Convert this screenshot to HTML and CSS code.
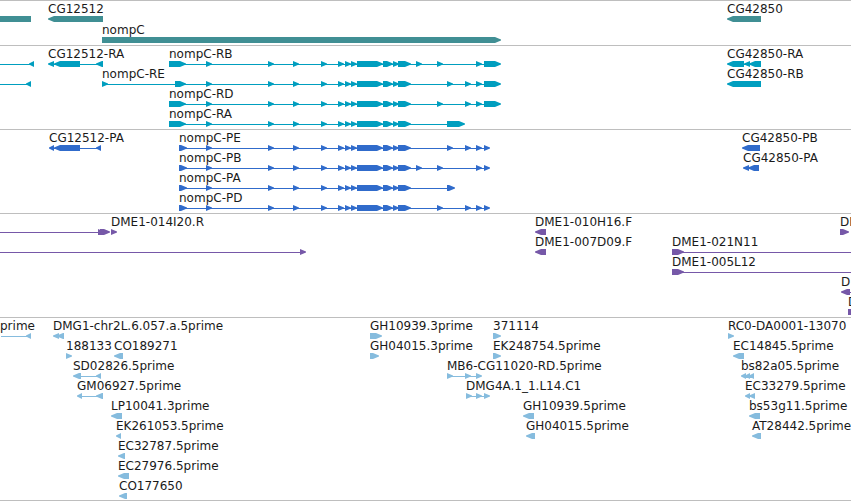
FILE: index.html
```html
<!DOCTYPE html>
<html lang="en">
<head>
    <meta charset="UTF-8">
    <meta name="viewport" content="width=device-width, initial-scale=1.0">
    <title>Genome Browser</title>

    <link rel="stylesheet" href="styles.css">
</head>
<body>

    <main class="tracks">
        <section class="track genes" id="genes" aria-label="Genes"></section>
        <section class="track transcripts" id="transcripts" aria-label="Transcripts"></section>
        <section class="track proteins" id="proteins" aria-label="Coding sequences"></section>
        <section class="track clones" id="clones" aria-label="Clones"></section>
        <section class="track ests" id="ests" aria-label="ESTs"></section>
    </main>

    <script src="tracks.js"></script>

</body>
</html>
```

FILE: styles.css
```css
body {
    margin: 0;
    background-color: white;
    color: black;
    font-family: "DejaVu Sans", sans-serif;
    font-size: 12px;
}

.tracks {
    overflow: hidden;
    border-bottom: 1px solid #bebebe;
}

/* Tracks */
.track {
    display: flex;
    flex-direction: column;
    padding: 1px 0 2px;
    border-top: 1px solid #bebebe;
}

.track:last-child {
    padding-bottom: 1px;
}

.genes {
    gap: 1px;
    color: #408f94;
}

.transcripts {
    color: #009ebf;
}

.proteins {
    color: #306bcb;
}

.clones {
    color: #7658a8;
}

.ests {
    color: #86bcde;
}

/* Features, placed along the row by their start on the sequence */
.row {
    position: relative;
    height: 20px;
}

.feature {
    position: absolute;
    top: 0;
}

.label {
    display: block;
    height: 14px;
    line-height: 14px;
    color: #1a1a1a;
    white-space: pre;
}

.glyph {
    display: block;
    height: 6px;
    fill: currentColor;
    overflow: visible;
}
```

FILE: tracks.js
```js
// Exons shared by every nompC transcript
const core = [[206, 212], [268, 274], [293, 299], [321, 327], [338, 344], [345, 351],
    [351, 357], [357, 383], [383, 393], [393, 399], [398, 411]];

// Each feature: [label, strand, exons, line end (when it runs past the exons)]
const tracks = {
    genes: [
        [
            ["", "-", [[-20, 31]]],
            ["CG12512", "-", [[48, 103]]],
            ["CG42850", "-", [[727, 761]]]
        ],
        [
            ["nompC", "+", [[102, 501]]]
        ]
    ],
    transcripts: [
        [
            ["", "-", [[-20, -10], [29, 34]]],
            ["CG12512-RA", "-", [[48, 54], [54, 80], [96, 103]]],
            ["nompC-RB", "+", [[169, 186], ...core, [416, 422], [437, 443], [476, 482], [484, 501]]],
            ["CG42850-RA", "-", [[727, 744], [744, 750], [749, 761]]]
        ],
        [
            ["", "-", [[-20, -10], [26, 31]]],
            ["nompC-RE", "+", [[102, 108], [175, 186], ...core, [447, 453], [465, 471], [476, 482], [484, 501]]],
            ["CG42850-RB", "-", [[727, 761]]]
        ],
        [
            ["nompC-RD", "+", [[169, 186], ...core, [437, 443], [465, 471], [476, 482], [484, 501]]]
        ],
        [
            ["nompC-RA", "+", [[169, 186], ...core, [447, 465]]]
        ]
    ],
    proteins: [
        [
            ["CG12512-PA", "-", [[49, 54], [54, 80], [96, 101]]],
            ["nompC-PE", "+", [[179, 187], ...core, [447, 453], [465, 471], [476, 482], [484, 490]]],
            ["CG42850-PB", "-", [[742, 760]]]
        ],
        [
            ["nompC-PB", "+", [[179, 187], ...core, [416, 422], [437, 443], [476, 482], [484, 490]]],
            ["CG42850-PA", "-", [[743, 749], [748, 759]]]
        ],
        [
            ["nompC-PA", "+", [[179, 187], ...core, [447, 455]]]
        ],
        [
            ["nompC-PD", "+", [[179, 187], ...core, [437, 443], [465, 471], [476, 482], [484, 490]]]
        ]
    ],
    clones: [
        [
            ["", "+", [[-20, -10], [98, 104], [100, 110]]],
            ["DME1-014I20.R", "+", [[111, 117]]],
            ["DME1-010H16.F", "-", [[535, 546]]],
            ["DME1", "+", [[840, 849]]]
        ],
        [
            ["", "+", [[-20, -10], [300, 306]]],
            ["DME1-007D09.F", "-", [[535, 546]]],
            ["DME1-021N11", "+", [[672, 684]], 3000]
        ],
        [
            ["DME1-005L12", "+", [[672, 684]], 3000]
        ],
        [
            ["D", "-", [[841, 850]], 3000]
        ],
        [
            ["D", "+", [[848, 862]]]
        ]
    ],
    ests: [
        [
            ["prime", "-", [[0, 0], [26, 31]]],
            ["DMG1-chr2L.6.057.a.5prime", "-", [[53, 59], [57, 64]]],
            ["GH10939.3prime", "+", [[370, 382]]],
            ["371114", "+", [[493, 501]]],
            ["RC0-DA0001-13070", "+", [[728, 734]]]
        ],
        [
            ["188133", "+", [[66, 72]]],
            ["CO189271", "-", [[114, 123]]],
            ["GH04015.3prime", "+", [[370, 379]]],
            ["EK248754.5prime", "+", [[493, 501]]],
            ["EC14845.5prime", "-", [[733, 744]]]
        ],
        [
            ["SD02826.5prime", "-", [[73, 81], [96, 101]]],
            ["MB6-CG11020-RD.5prime", "+", [[447, 453], [465, 471], [476, 482]]],
            ["bs82a05.5prime", "-", [[741, 746], [745, 750], [749, 754]]]
        ],
        [
            ["GM06927.5prime", "-", [[77, 82], [96, 103]]],
            ["DMG4A.1_1.L14.C1", "+", [[466, 472], [476, 482], [484, 490]]],
            ["EC33279.5prime", "-", [[745, 750], [749, 755]]]
        ],
        [
            ["LP10041.3prime", "-", [[111, 122]]],
            ["GH10939.5prime", "-", [[523, 534]]],
            ["bs53g11.5prime", "-", [[749, 760]]]
        ],
        [
            ["EK261053.5prime", "-", [[116, 121]]],
            ["GH04015.5prime", "-", [[526, 535]]],
            ["AT28442.5prime", "-", [[752, 761]]]
        ],
        [
            ["EC32787.5prime", "-", [[118, 125]]]
        ],
        [
            ["EC27976.5prime", "-", [[118, 129]]]
        ],
        [
            ["CO177650", "-", [[119, 127]]]
        ]
    ]
};

// Box with a pointed end on the strand's side
function exonPath(from, to, strand) {
    const head = Math.min(6, to - from);
    if (strand === "+") {
        return `M${from} 0H${to - head}L${to} 2.5V3.5L${to - head} 6H${from}z`;
    }
    return `M${to} 0H${from + head}L${from} 2.5V3.5L${from + head} 6H${to}z`;
}

function drawFeature([label, strand, exons, lineEnd]) {
    const start = exons[0][0];
    const end = lineEnd || exons[exons.length - 1][1];
    const width = end - start;
    const boxes = exons
        .filter(([from, to]) => to > from)
        .map(([from, to]) => exonPath(from - start, to - start, strand))
        .join("");
    // a lone exon has no intron line
    const line = exons.length > 1 || lineEnd ? `M1 3H${width - 1}V4H1z` : "";

    return `
        <div class="feature" style="left: ${start}px">
            <span class="label">${label}</span>
            <svg class="glyph" width="${width}" height="6" aria-hidden="true"><path d="${boxes}"/><path d="${line}"/></svg>
        </div>`;
}

for (const [id, rows] of Object.entries(tracks)) {
    document.getElementById(id).innerHTML = rows
        .map(row => `<div class="row">${row.map(drawFeature).join("")}</div>`)
        .join("");
}
```
